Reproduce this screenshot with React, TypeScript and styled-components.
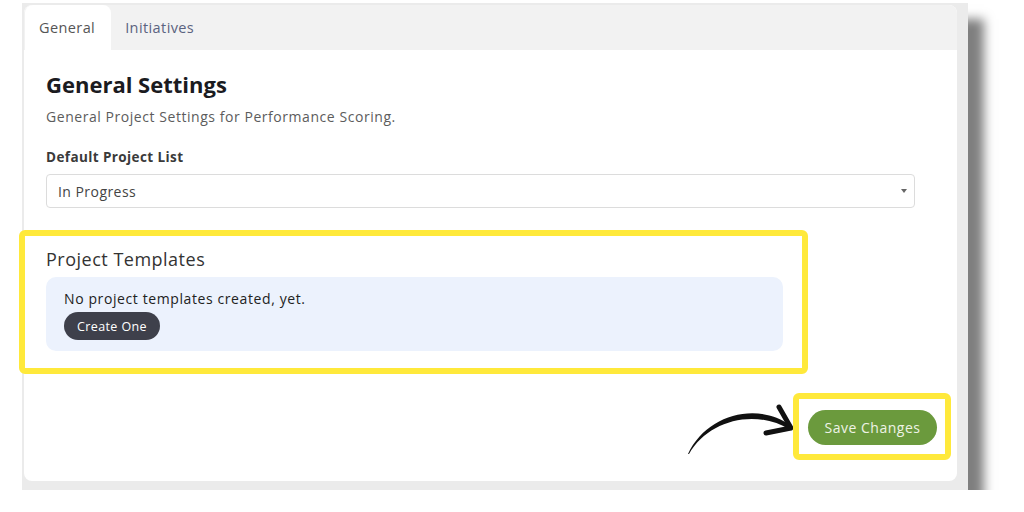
import styled, { createGlobalStyle } from 'styled-components';

const GlobalStyle = createGlobalStyle`
	body {
		margin: 0;
		background: #ffffff;
		font-family: 'Open Sans', 'Noto Sans', sans-serif;
	}
`;

function App() {
	return (
		<Page>
			<GlobalStyle />
			<Frame>
				<Card>
					<TabBar>
						<Tab active>General</Tab>
						<Tab>Initiatives</Tab>
					</TabBar>
					<Body>
						<Title>General Settings</Title>
						<Subtitle>General Project Settings for Performance Scoring.</Subtitle>
						<Label>Default Project List</Label>
						<Select>
							<span>In Progress</span>
							<Caret />
						</Select>
						<Highlight>
							<SectionTitle>Project Templates</SectionTitle>
							<InfoBox>
								<InfoText>No project templates created, yet.</InfoText>
								<DarkButton>Create One</DarkButton>
							</InfoBox>
						</Highlight>
						<Footer>
							<Arrow width="107" height="56" viewBox="0 0 107 56">
								<path
									d="M2 51 C 20 12, 70 -2, 104 22 L 104 27 C 70 5, 22 17, 3 51 Z"
									fill="#111"
								/>
								<path
									d="M93 4 L105 25 L80 30"
									fill="none"
									stroke="#111"
									strokeWidth="5"
									strokeLinecap="round"
									strokeLinejoin="round"
								/>
							</Arrow>
							<SaveHighlight>
								<SaveButton>Save Changes</SaveButton>
							</SaveHighlight>
						</Footer>
					</Body>
				</Card>
			</Frame>
		</Page>
	);
}

const Page = styled.div`
	padding: 3px 0 0 22px;
`;

const Frame = styled.div`
	width: 946px;
	box-sizing: border-box;
	padding: 2px 11px 9px 2px;
	background: #ebebeb;
	box-shadow: 16px 16px 10px rgba(0, 0, 0, 0.5);
`;

const Card = styled.div`
	width: 933px;
	height: 476px;
	background: #ffffff;
	border-radius: 8px;
`;

const TabBar = styled.div`
	display: flex;
	height: 45px;
	padding-left: 1px;
	background: #f2f2f2;
	border-radius: 8px 8px 0 0;
`;

const Tab = styled.div<{ active?: boolean }>`
	display: flex;
	align-items: center;
	padding: 0 16px 0 14px;
	font-size: 14.5px;
	letter-spacing: 0.4px;
	color: ${(p) => (p.active ? '#555555' : '#5b6380')};
	background: ${(p) => (p.active ? '#ffffff' : 'transparent')};
	border-radius: 8px 8px 0 0;
`;

const Body = styled.div`
	display: flex;
	flex-direction: column;
	padding: 0 42px 0 22px;
`;

const Title = styled.h1`
	margin: 20px 0 0;
	font-size: 22px;
	line-height: 28px;
	font-weight: 700;
	color: #1b1b1f;
`;

const Subtitle = styled.p`
	margin: 9px 0 0;
	font-size: 14px;
	letter-spacing: 0.55px;
	line-height: 20px;
	color: #5c5c5c;
`;

const Label = styled.div`
	margin-top: 20px;
	font-size: 13.5px;
	letter-spacing: 0.4px;
	line-height: 20px;
	font-weight: 700;
	color: #3a3a3a;
`;

const Select = styled.div`
	display: flex;
	align-items: center;
	justify-content: space-between;
	margin-top: 7px;
	height: 34px;
	box-sizing: border-box;
	padding: 0 7px 0 11px;
	border: 1px solid #dcdcdc;
	border-radius: 4px;
	font-size: 14px;
	letter-spacing: 0.45px;
	color: #444444;
`;

const Caret = styled.span`
	width: 0;
	height: 0;
	border-left: 3.5px solid transparent;
	border-right: 3.5px solid transparent;
	border-top: 4px solid #666666;
`;

const Highlight = styled.div`
	margin: 22px 0 0 -27px;
	width: 789px;
	height: 144px;
	box-sizing: border-box;
	padding: 11px 19px 0 21px;
	border: 6px solid #ffe93b;
	border-radius: 6px;
`;

const SectionTitle = styled.div`
	font-size: 18px;
	letter-spacing: 0.5px;
	line-height: 24px;
	color: #333333;
`;

const InfoBox = styled.div`
	display: flex;
	flex-direction: column;
	align-items: flex-start;
	margin-top: 6px;
	height: 74px;
	box-sizing: border-box;
	padding: 12px 18px 0;
	background: #ecf2fd;
	border-radius: 10px;
`;

const InfoText = styled.div`
	font-size: 14px;
	letter-spacing: 0.6px;
	line-height: 20px;
	color: #222222;
`;

const DarkButton = styled.button`
	margin-top: 3px;
	height: 28px;
	width: 96px;
	padding: 0;
	border: none;
	border-radius: 14px;
	background: #3e404b;
	color: #ffffff;
	font-family: inherit;
	font-size: 12.5px;
	letter-spacing: 0.4px;
`;

const Footer = styled.div`
	display: flex;
	justify-content: flex-end;
	align-items: flex-start;
	margin: 19px -36px 0 0;
`;

const Arrow = styled.svg`
	display: block;
	margin-top: 10px;
`;

const SaveHighlight = styled.div`
	padding: 11px 8px 9px 9px;
	border: 6px solid #ffe93b;
	border-radius: 6px;
`;

const SaveButton = styled.button`
	display: block;
	width: 129px;
	height: 35px;
	padding: 0;
	border: none;
	border-radius: 18px;
	background: #6b9a3d;
	color: #eef3e6;
	font-family: inherit;
	font-size: 14px;
	letter-spacing: 0.5px;
`;

export default App;
